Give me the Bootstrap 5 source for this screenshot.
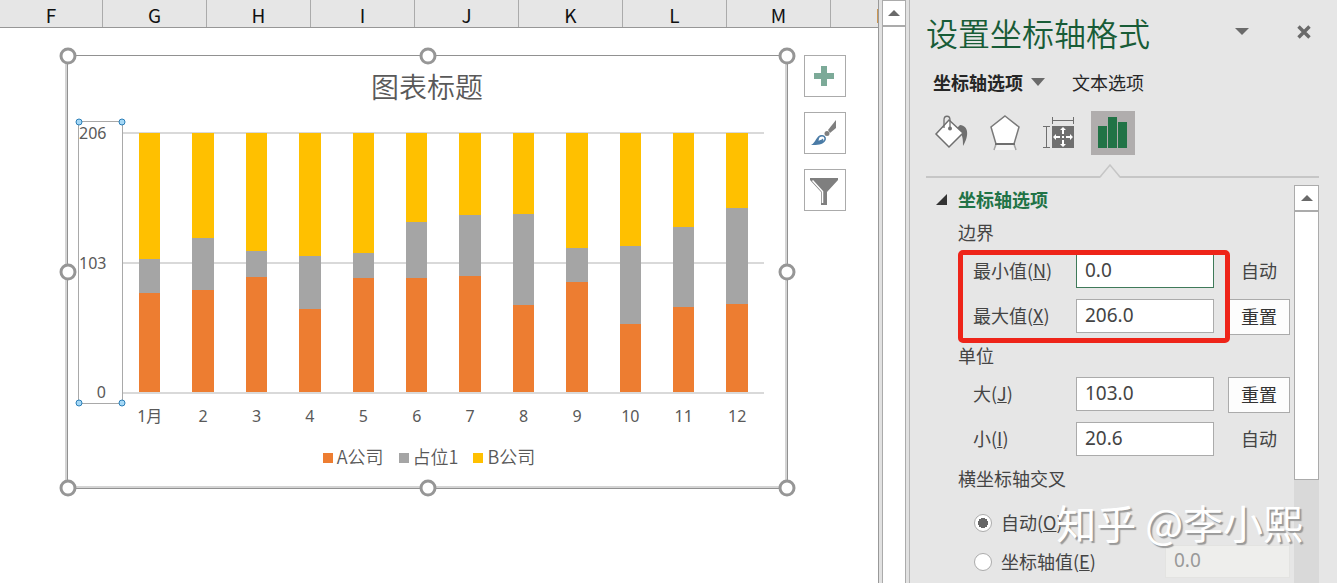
<!DOCTYPE html>
<html lang="zh-CN">
<head>
<meta charset="utf-8">
<meta name="viewport" content="width=device-width, initial-scale=1">
<title>设置坐标轴格式</title>
<link href="https://cdn.jsdelivr.net/npm/bootstrap@5.3.0/dist/css/bootstrap.min.css" rel="stylesheet">
<style>
  body { font-family: "Noto Sans", "Noto Sans CJK SC", sans-serif; background: #fff; }
  .cjk { font-family: "Noto Sans CJK SC", sans-serif; }

  /* worksheet */
  .sheet-head { height: 28px; background: #e6e6e6; border-bottom: 1px solid #979797; }
  .sheet-col { flex: 0 0 104px; border-right: 1px solid #ababab; font-size: 19px; line-height: 29px; color: #111; text-align: center; }
  .sheet-col:first-child { flex-basis: 103px; }
  .sheet-body { padding: 27px 32px 0 67px; gap: 16px; }
  .chart-frame { border: 1px solid #919191; box-shadow: inset -2px -2px 0 #d4d4d4, -2px 0 0 #d4d4d4; padding: 9px 23px 20px 10px; color: #595959; }
  .grip { width: 17px; height: 17px; border: 3px solid #969696; border-radius: 50%; background: #fff; }
  .chart-title { font-size: 28px; line-height: 42px; margin-bottom: 14px; font-weight: 350; padding-left: 12px; }
  .value-axis { width: 45px; height: 283px; border: 1px solid #a9a9a9; font-size: 16px; line-height: 22px; padding-right: 16px; }
  .dot { width: 7px; height: 7px; border: 1px solid #2b7fb8; border-radius: 50%; background: #a5d8f6; }
  .plot { height: 262px; margin-top: 11px; }
  .grid-rule { height: 2px; background: #d9d9d9; }
  .bars { padding: 1px 0 2px; }
  .stack { width: 40%; }
  .stack > div { flex-basis: 0; }
  .s-a { background: #ed7d31; } .s-p { background: #a5a5a5; } .s-b { background: #ffc000; }
  .months { font-size: 16px; line-height: 24px; margin-top: 10px; }
  .legend-row { gap: 15px; font-size: 18px; line-height: 24px; margin-top: 16px; padding-left: 28px; padding-right: 12px; font-weight: 350; }
  .key { width: 10px; height: 10px; margin: 4px 4px 0 0; }
  .tools { gap: 15px; }
  .tool { width: 42px; height: 42px; border: 1px solid #ababab; background: #fff; }

  /* scroll bars */
  .gutter { width: 4px; background: #e1e1e1; border-left: 1px solid #999; }
  .gutter-plain { width: 3px; background: #e1e1e1; }
  .vbar { width: 24px; background: #fff; border: 1px solid #ababab; border-width: 0 1px; }
  .vbar-btn { height: 27px; border: 0; border-top: 1px solid #ababab; border-bottom: 2px solid #ababab; background: #fff; }

  /* format pane */
  .pane { width: 428px; background: #e6e6e6; border-left: 1px solid #b5b5b5; padding: 11px 18px 0 16px; color: #444; font-size: 18px; }
  .pane-title { font-size: 32px; line-height: 42px; color: #185c37; font-weight: 350; }
  .flat { border: 0; background: transparent; padding: 0; }
  .pane-tabs { gap: 27px; margin-top: 14px; padding-left: 7px; line-height: 30px; color: #262626; }
  .icon-tabs { gap: 10px; margin-top: 14px; padding: 0 3px 21px; border-bottom: 2px solid #c6c6c6; }
  .icon-tab { width: 44px; height: 44px; }
  .icon-tab.active { background: #b0adad; }
  .pointer { left: 9px; top: 53px; }
  .pane-body { padding-top: 7px; }
  .fields { padding: 0 4px 0 10px; }
  .section-head { line-height: 28px; color: #217346; gap: 11px; }
  .group { padding-left: 22px; }
  .group-name { font-size: 18px; line-height: 28px; margin: 8px 0; font-weight: 400; }
  .group-name.first { margin-top: 5px; }
  .rows { display: grid; gap: 11px; padding-left: 15px; }
  .field { display: grid; grid-template-columns: 103px 1fr 62px; height: 34px; line-height: 33px; }
  .field .form-control { height: 34px; padding: 0 8px 3px; font-size: 19px; line-height: 28px; border: 1px solid #ababab; border-radius: 0; color: #444; margin-right: 14px; width: auto; min-width: 0; background: #fff; font-family: "Noto Sans", sans-serif; }
  .field .form-control.current { border-color: #3f7a59; }
  .reset { height: 36px; border: 1px solid #ababab; background: #fdfdfd; color: #333; padding: 0 0 2px; line-height: 32px; }
  .callout { left: 0; right: 60px; top: -4px; bottom: -10px; border: 5px solid #ee2419; border-radius: 5px; pointer-events: none; }
  .choices { display: grid; gap: 6px; margin-top: 14px; padding-left: 16px; line-height: 31px; }
  .choice { height: 33px; gap: 9px; }
  .choice .form-check-input { width: 18px; height: 18px; margin: 0; background-color: #fff; border: 1px solid #ababab; }
  .choice .form-check-input:checked { background-image: radial-gradient(circle, #666 0 5px, #fff 5px); }
  .choice .form-control { width: 125px; height: 33px; padding: 0 8px 3px; border: 1px solid #e3e3e1; border-radius: 0; background: #eeeeec; color: #999; font-size: 19px; font-family: "Noto Sans", sans-serif; }
  .pane-scroll { width: 25px; background: #d9d9d9; }
  .pane-scroll .vbar-btn { border-left: 1px solid #ababab; border-right: 1px solid #ababab; }
  .pane-thumb { height: 268px; background: #fff; border: 1px solid #ababab; border-top: 0; }
  .watermark { right: 34px; bottom: 33px; font-size: 40px; line-height: 56px; color: #fff; text-shadow: 2px 2px 1px #999; pointer-events: none; }
</style>
</head>
<body>
<div class="d-flex vh-100 overflow-hidden position-relative">

  <main class="flex-grow-1 overflow-hidden">
    <div class="sheet-head d-flex overflow-hidden cjk">
      <div class="sheet-col">F</div><div class="sheet-col">G</div><div class="sheet-col">H</div><div class="sheet-col">I</div><div class="sheet-col">J</div><div class="sheet-col">K</div><div class="sheet-col">L</div><div class="sheet-col">M</div><div class="sheet-col">N</div>
    </div>
    <div class="sheet-body d-flex align-items-start">
      <section class="chart-frame position-relative flex-grow-1">
        <h1 class="chart-title cjk text-center">图表标题</h1>
        <div class="d-flex">
          <div class="value-axis position-relative d-flex flex-column justify-content-between text-end">
            <span>206</span><span>103</span><span>0</span>
            <i class="dot position-absolute top-0 start-0 translate-middle"></i>
            <i class="dot position-absolute top-0 start-100 translate-middle"></i>
            <i class="dot position-absolute top-100 start-0 translate-middle"></i>
            <i class="dot position-absolute top-100 start-100 translate-middle"></i>
          </div>
          <div class="flex-grow-1">
            <div class="plot position-relative">
              <div class="position-absolute top-0 start-0 w-100 h-100 d-flex flex-column justify-content-between">
                <div class="grid-rule"></div><div class="grid-rule"></div><div class="grid-rule"></div>
              </div>
              <div class="bars d-flex h-100 position-relative">
                <div class="col-1 d-flex justify-content-center"><div class="stack d-flex flex-column"><div class="s-b" style="flex-grow:126"></div><div class="s-p" style="flex-grow:34"></div><div class="s-a" style="flex-grow:99"></div></div></div>
                <div class="col-1 d-flex justify-content-center"><div class="stack d-flex flex-column"><div class="s-b" style="flex-grow:105"></div><div class="s-p" style="flex-grow:52"></div><div class="s-a" style="flex-grow:102"></div></div></div>
                <div class="col-1 d-flex justify-content-center"><div class="stack d-flex flex-column"><div class="s-b" style="flex-grow:118"></div><div class="s-p" style="flex-grow:26"></div><div class="s-a" style="flex-grow:115"></div></div></div>
                <div class="col-1 d-flex justify-content-center"><div class="stack d-flex flex-column"><div class="s-b" style="flex-grow:123"></div><div class="s-p" style="flex-grow:53"></div><div class="s-a" style="flex-grow:83"></div></div></div>
                <div class="col-1 d-flex justify-content-center"><div class="stack d-flex flex-column"><div class="s-b" style="flex-grow:120"></div><div class="s-p" style="flex-grow:25"></div><div class="s-a" style="flex-grow:114"></div></div></div>
                <div class="col-1 d-flex justify-content-center"><div class="stack d-flex flex-column"><div class="s-b" style="flex-grow:89"></div><div class="s-p" style="flex-grow:56"></div><div class="s-a" style="flex-grow:114"></div></div></div>
                <div class="col-1 d-flex justify-content-center"><div class="stack d-flex flex-column"><div class="s-b" style="flex-grow:82"></div><div class="s-p" style="flex-grow:61"></div><div class="s-a" style="flex-grow:116"></div></div></div>
                <div class="col-1 d-flex justify-content-center"><div class="stack d-flex flex-column"><div class="s-b" style="flex-grow:81"></div><div class="s-p" style="flex-grow:91"></div><div class="s-a" style="flex-grow:87"></div></div></div>
                <div class="col-1 d-flex justify-content-center"><div class="stack d-flex flex-column"><div class="s-b" style="flex-grow:115"></div><div class="s-p" style="flex-grow:34"></div><div class="s-a" style="flex-grow:110"></div></div></div>
                <div class="col-1 d-flex justify-content-center"><div class="stack d-flex flex-column"><div class="s-b" style="flex-grow:113"></div><div class="s-p" style="flex-grow:78"></div><div class="s-a" style="flex-grow:68"></div></div></div>
                <div class="col-1 d-flex justify-content-center"><div class="stack d-flex flex-column"><div class="s-b" style="flex-grow:94"></div><div class="s-p" style="flex-grow:80"></div><div class="s-a" style="flex-grow:85"></div></div></div>
                <div class="col-1 d-flex justify-content-center"><div class="stack d-flex flex-column"><div class="s-b" style="flex-grow:75"></div><div class="s-p" style="flex-grow:96"></div><div class="s-a" style="flex-grow:88"></div></div></div>
              </div>
            </div>
            <div class="months row g-0 text-center">
              <div class="col-1">1月</div><div class="col-1">2</div><div class="col-1">3</div><div class="col-1">4</div><div class="col-1">5</div><div class="col-1">6</div><div class="col-1">7</div><div class="col-1">8</div><div class="col-1">9</div><div class="col-1">10</div><div class="col-1">11</div><div class="col-1">12</div>
            </div>
          </div>
        </div>
        <div class="legend-row d-flex justify-content-center cjk">
          <span class="d-flex align-items-center"><i class="key s-a"></i>A公司</span>
          <span class="d-flex align-items-center"><i class="key s-p"></i>占位1</span>
          <span class="d-flex align-items-center"><i class="key s-b"></i>B公司</span>
        </div>
        <i class="grip position-absolute top-0 start-0 translate-middle"></i>
        <i class="grip position-absolute top-0 start-50 translate-middle"></i>
        <i class="grip position-absolute top-0 start-100 translate-middle"></i>
        <i class="grip position-absolute top-50 start-0 translate-middle"></i>
        <i class="grip position-absolute top-50 start-100 translate-middle"></i>
        <i class="grip position-absolute top-100 start-0 translate-middle"></i>
        <i class="grip position-absolute top-100 start-50 translate-middle"></i>
        <i class="grip position-absolute top-100 start-100 translate-middle"></i>
      </section>
      <div class="tools d-flex flex-column">
        <button type="button" class="tool p-0 d-flex" aria-label="图表元素"><svg width="40" height="40"><path d="M16 10h6v7h7v6h-7v7h-6v-7H9v-6h7z" fill="#7caa98"/></svg></button>
        <button type="button" class="tool p-0 d-flex" aria-label="图表样式"><svg width="40" height="40"><path d="M31 7v8l-6 5-2-3z" fill="#7f7f7f"/><circle cx="22" cy="20.500" r="2.500" fill="#7f7f7f"/><path d="M6 32c5-2 5-10 11-10 3 0 5 3 3 6-2 4-8 4-14 4z" fill="#4a7ba6"/><path d="M13 28c0-2 1-5 4-5s4 3 2 5c-1 1-2-1-1-2" fill="#fff" stroke="#4a7ba6" stroke-width="1.200"/></svg></button>
        <button type="button" class="tool p-0 d-flex" aria-label="图表筛选器"><svg width="40" height="40"><path d="M5 8h28v2L22 22v13h-6V22L5 10z" fill="#7f7f7f"/><path d="M7.500 10.500 17.500 21.500V33" fill="none" stroke="#fff" stroke-width="1.500"/></svg></button>
      </div>
    </div>
  </main>

  <div class="gutter flex-shrink-0"></div>
  <div class="vbar flex-shrink-0 d-flex flex-column">
    <button type="button" class="vbar-btn w-100 p-0 d-flex align-items-center justify-content-center" aria-label="向上滚动"><svg width="12" height="6"><path d="M0 6 6 0l6 6z" fill="#6a6a6a"/></svg></button>
  </div>
  <div class="gutter-plain flex-shrink-0"></div>

  <aside class="pane flex-shrink-0 d-flex flex-column cjk">
    <header class="d-flex align-items-center">
      <h2 class="pane-title m-0 me-auto">设置坐标轴格式</h2>
      <button type="button" class="flat d-flex me-5" aria-label="任务窗格选项"><svg width="14" height="8"><path d="M0 0h14L7 7z" fill="#6a6a6a"/></svg></button>
      <button type="button" class="flat d-flex me-2" aria-label="关闭"><svg width="14" height="14"><path d="M1.500 1.500l11 11M12.500 1.500l-11 11" stroke="#6a6a6a" stroke-width="3.400"/></svg></button>
    </header>
    <div class="pane-tabs d-flex align-items-center">
      <button type="button" class="flat fw-bold text-reset d-flex align-items-center">坐标轴选项<svg class="ms-2" width="14" height="8"><path d="M0 0h14L7 8z" fill="#6a6a6a"/></svg></button>
      <button type="button" class="flat text-reset">文本选项</button>
    </div>
    <div class="icon-tabs d-flex">
      <button type="button" class="flat icon-tab" aria-label="填充与线条"><svg width="44" height="44"><path d="M31 14c9 1 9 11 3 21 0-7 0-12-6-18z" fill="#6f6f6f"/><path d="M7 23 20 9l14 13-14 14z" fill="#fff" stroke="#6f6f6f" stroke-width="1.500"/><path d="M15 17V9c0-5 6-5 6 0v8" fill="none" stroke="#6f6f6f" stroke-width="1.300"/><circle cx="21" cy="17.500" r="2" fill="#6f6f6f"/></svg></button>
      <button type="button" class="flat icon-tab" aria-label="效果"><svg width="44" height="44"><path d="M13 33l-2 6M31 33l2 6" stroke="#a5a5a5" stroke-width="1.500"/><path d="M14 34h16l2 5H12z" fill="#f4f4f4"/><path d="M22 5 36 16l-5 17H13L8 16z" fill="#fff" stroke="#7a7a7a" stroke-width="1.500"/><path d="M12 33h20" stroke="#6f6f6f" stroke-width="2"/></svg></button>
      <button type="button" class="flat icon-tab" aria-label="大小与属性"><svg width="44" height="44"><path d="M15.500 6v7M36.500 6v7M15 9.500h22M6 15.500h7M6 36.500h7M9.500 15v22" fill="none" stroke="#6f6f6f"/><path d="M15 15h22v22H15z" fill="#6f6f6f"/><path d="M26 16l3 3h-2v4h-2v-4h-2zM26 36l-3-3h2v-4h2v4h2zM16 26l3-3v2h4v2h-4v2zM36 26l-3 3v-2h-4v-2h4v-2zM25 25h2v2h-2z" fill="#fff"/></svg></button>
      <button type="button" class="flat icon-tab active position-relative" aria-label="坐标轴选项"><svg width="44" height="44"><path d="M7 15h9v22H7zM17 6h9v31h-9zM27 11h9v26h-9z" fill="#217346"/></svg><svg class="pointer position-absolute" width="20" height="14"><path d="M0 14 10 1l10 13z" fill="#e6e6e6"/><path d="M0 13 10 1l10 12" fill="none" stroke="#c6c6c6" stroke-width="1.500"/></svg></button>
    </div>
    <div class="pane-body d-flex flex-grow-1">
      <form class="fields flex-grow-1">
        <div class="section-head d-flex align-items-center fw-bold"><svg width="11" height="11"><path d="M11 0v11H0z" fill="#333"/></svg>坐标轴选项</div>
        <div class="group">
          <h3 class="group-name first">边界</h3>
          <div class="rows position-relative">
            <div class="field"><label for="min">最小值(<u>N</u>)</label><input id="min" class="form-control current" value="0.0"><span class="text-center">自动</span></div>
            <div class="field"><label for="max">最大值(<u>X</u>)</label><input id="max" class="form-control" value="206.0"><button type="button" class="reset">重置</button></div>
            <div class="callout position-absolute"></div>
          </div>
          <h3 class="group-name">单位</h3>
          <div class="rows">
            <div class="field"><label for="major">大(<u>J</u>)</label><input id="major" class="form-control" value="103.0"><button type="button" class="reset">重置</button></div>
            <div class="field"><label for="minor">小(<u>I</u>)</label><input id="minor" class="form-control" value="20.6"><span class="text-center">自动</span></div>
          </div>
          <h3 class="group-name mb-0">横坐标轴交叉</h3>
          <div class="choices">
            <div class="choice d-flex align-items-center"><input class="form-check-input" type="radio" name="cross" id="auto" checked><label for="auto">自动(<u>O</u>)</label></div>
            <div class="choice d-flex align-items-center"><input class="form-check-input" type="radio" name="cross" id="value"><label for="value" class="me-auto">坐标轴值(<u>E</u>)</label><input class="form-control" value="0.0" aria-label="坐标轴值" disabled></div>
          </div>
        </div>
      </form>
      <div class="pane-scroll flex-shrink-0">
        <button type="button" class="vbar-btn w-100 p-0 d-flex align-items-center justify-content-center" aria-label="向上滚动"><svg width="12" height="6"><path d="M0 6 6 0l6 6z" fill="#6a6a6a"/></svg></button>
        <div class="pane-thumb"></div>
      </div>
    </div>
  </aside>

  <div class="watermark position-absolute cjk">知乎 @李小熙</div>
</div>
<script src="https://cdn.jsdelivr.net/npm/bootstrap@5.3.0/dist/js/bootstrap.bundle.min.js"></script>
</body>
</html>
